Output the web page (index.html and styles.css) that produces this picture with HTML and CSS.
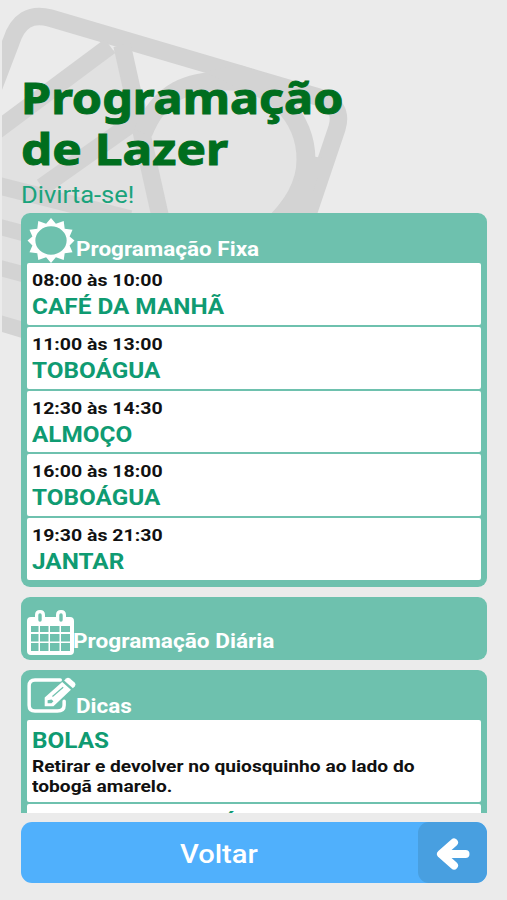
FILE: index.html
```html
<!DOCTYPE html>
<html lang="pt-BR">
<head>
<meta charset="utf-8">
<title>Programação de Lazer</title>
<link rel="stylesheet" href="styles.css">
</head>
<body>
<svg class="watermark" viewBox="2 0 358 350" aria-hidden="true">
  <path fill="#e1e1e1" d="M2 127L105 50L123 50L150 115L165 220V330L2 325Z"/>
  <circle cx="225" cy="160" r="80" fill="#e4e4e4"/>
  <g fill="none" stroke="#d3d3d3" stroke-width="17.5">
    <path d="M-10 97 L11 42 Q21 10 50 18 L318 97 Q344 105 337 128 L307 217"/>
    <path d="M110 46 L-4 131"/>
    <path d="M122 45 L161 220"/>
    <path d="M42 187 L148 112"/>
    <path stroke-width="19" d="M143 133 C160 90 190 81 225 81 A78 79 0 0 1 306 160 Q306 195 270 228"/>
    <path d="M-4 185 L130 219"/>
    <path stroke-width="16" d="M-4 226 L30 235M-4 267 L30 276M-4 322 L30 332"/>
  </g>
  <path fill="#d3d3d3" d="M205 72L240 65L335 97L300 105L240 89Z M310 156L324 158L305 217H270L302 175Z"/>
</svg>
<main class="page">
  <header class="heading">
    <h1><span class="t title-a">Programação</span><span class="t title-b">de Lazer</span></h1>
    <p><span class="t subtitle">Divirta-se!</span></p>
  </header>
  <div class="scroller">
    <section class="panel">
      <h2>
        <svg class="icon-sun" viewBox="0 0 48 46"><path fill="#fff" fill-rule="evenodd" d="M24 0L29 6L37 3L38 11L46 12L43 19L48 23L43 28L46 35L38 36L37 43L29 40L24 46L19 40L11 43L10 36L2 35L5 28L0 23L5 19L2 12L10 11L11 3L19 6Z M24 8.5A16 14.5 0 1 0 24 37.5A16 14.5 0 1 0 24 8.5Z"/></svg>
        <span class="t head">Programação Fixa</span>
      </h2>
      <ul class="list">
        <li><time><span class="t time">08:00 às 10:00</span></time><strong><span class="t name">CAFÉ DA MANHÃ</span></strong></li>
        <li><time><span class="t time">11:00 às 13:00</span></time><strong><span class="t name">TOBOÁGUA</span></strong></li>
        <li><time><span class="t time">12:30 às 14:30</span></time><strong><span class="t name">ALMOÇO</span></strong></li>
        <li><time><span class="t time">16:00 às 18:00</span></time><strong><span class="t name">TOBOÁGUA</span></strong></li>
        <li><time><span class="t time">19:30 às 21:30</span></time><strong><span class="t name">JANTAR</span></strong></li>
      </ul>
    </section>
    <section class="panel daily">
      <h2>
        <svg class="icon-calendar" viewBox="0 0 47 45"><path fill="#fff" fill-rule="evenodd" d="M4 7H8V5Q8 0 13 0Q18 0 18 5V7H29V5Q29 0 34 0Q39 0 39 5V7H43Q47 7 47 11V41Q47 45 43 45H4Q0 45 0 41V11Q0 7 4 7Z M4 16V22H11.5V16Z M13 16V22H21.5V16Z M23 16V22H32.5V16Z M34 16V22H43V16Z M4 24V31.5H11.5V24Z M13 24V31.5H21.5V24Z M23 24V31.5H32.5V24Z M34 24V31.5H43V24Z M4 33V41H11.5V33Z M13 33V41H21.5V33Z M23 33V41H32.5V33Z M34 33V41H43V33Z"/><path stroke="#6ec1ae" stroke-width="3.4" stroke-linecap="round" d="M13 5V10M34 5V10"/></svg>
        <span class="t head head-daily">Programação Diária</span>
      </h2>
    </section>
    <section class="panel tips">
      <h2>
        <svg class="icon-edit" viewBox="0 0 50 36"><path d="M34 2H8Q2 2 2 8V28Q2 34 8 34H31Q38 34 38 28V24" fill="none" stroke="#fff" stroke-width="3.6" stroke-linecap="round"/><path fill="#fff" fill-rule="evenodd" d="M18 20L36 4L45 12L27 29L18 29Z M21 23L21 26L25 26L27 24L25 22Z"/><path fill="#fff" d="M38 2.5L40 .5Q42 -1 44 .5L49 5Q50.500 7 49 8.500L47 10.500Z"/><path d="M26 19L37 9.500" stroke="#6ec1ae" stroke-width="1.2"/></svg>
        <span class="t head">Dicas</span>
      </h2>
      <ul class="list">
        <li><strong><span class="t name">BOLAS</span></strong><p class="tip"><span class="t tip-a">Retirar e devolver no quiosquinho ao lado do</span><span class="t tip-a">tobogã amarelo.</span></p></li>
        <li><strong><span class="t name">BRINQUEDO AQUÁTICO</span></strong></li>
      </ul>
    </section>
  </div>
  <button class="back" type="button">
    <span class="label"><span class="t voltar">Voltar</span></span>
    <span class="arrow"><svg viewBox="0 0 34 32"><path d="M18 4.500L5 16L18 27.500M6 16H29.500" fill="none" stroke="#fff" stroke-width="8" stroke-linecap="round" stroke-linejoin="round"/></svg></span>
  </button>
</main>
</body>
</html>
```
FILE: styles.css
```css
* { box-sizing: border-box; margin: 0; padding: 0; }
body { position: relative; width: 507px; height: 900px; overflow: hidden; background: #ebebeb; font-family: Roboto, "Liberation Sans", sans-serif; }
.watermark { position: absolute; left: 2px; top: 0; width: 358px; height: 350px; overflow: hidden; }
.page { position: relative; height: 900px; padding: 72px 20px 17px 21px; display: flex; flex-direction: column; }
.t { display: block; width: max-content; transform-origin: 0 50%; white-space: nowrap; }
.heading { height: 141px; flex: none; }
h1 { font: bold 42.5px/51px "Noto Sans", sans-serif; color: #006e1e; -webkit-text-stroke: 1px #006e1e; }
.title-a { transform: scaleX(1.142); }
.title-b { transform: scaleX(1.165); }
.heading p { font-size: 23px; line-height: 36px; color: #1aa37c; margin-top: 4px; }
.subtitle { transform: scaleX(1.11); }
.scroller { height: 600px; overflow: hidden; flex: none; }
.panel { background: #6ec1ae; border-radius: 9px; padding: 0 6px 7.25px; margin-bottom: 10px; }
h2 { display: flex; align-items: flex-end; height: 50px; font-size: 19.5px; line-height: 26px; color: #fff; }
h2 svg { display: block; flex: none; overflow: visible; }
.head { transform: scaleX(1.153); }
.head-daily { transform: scaleX(1.16); }
.icon-sun { width: 48px; height: 45px; margin-right: 1px; }
.icon-calendar { width: 47px; height: 45px; margin-right: -1px; }
.icon-edit { width: 49px; height: 35px; margin-bottom: 7px; }
.list { list-style: none; display: grid; gap: 2px; }
.list li { background: #fff; border-radius: 2px; height: 61.75px; padding: 5px; }
time { display: block; font-size: 16.7px; font-weight: bold; line-height: 25px; color: #111; }
.time { transform: scaleX(1.168); }
strong { display: block; font-size: 21.3px; line-height: 28px; color: #0f9b72; }
.name { transform: scaleX(1.143); }
.tip { font-size: 16.7px; font-weight: bold; line-height: 20px; color: #111; margin-top: 2px; }
.tip-a { transform: scaleX(1.148); }
.daily { height: 63px; padding-top: 8px; }
.tips .list li { padding-top: 6.5px; }
.tips .list li:first-child { height: 81.5px; }
.back { display: flex; flex: none; margin-top: 9px; height: 61px; border: 0; border-radius: 11px; background: #50b0fc; overflow: hidden; color: #fff; font: 500 26px/64px Roboto, sans-serif; text-align: left; }
.label { flex: 1; padding-left: 159px; }
.voltar { transform: scaleX(1.12); }
.arrow { width: 69px; height: 61px; background: #489fe0; border-radius: 11px; padding: 16px 0 0 18px; }
.arrow svg { display: block; width: 34px; height: 32px; }
```
